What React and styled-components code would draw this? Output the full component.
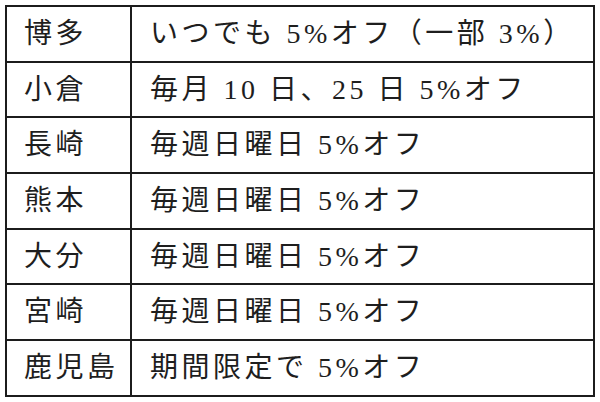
import React from "react";
import styled, { createGlobalStyle } from "styled-components";

const Global = createGlobalStyle`
  html, body { margin: 0; padding: 0; background: #ffffff; }
  body { font-family: "Liberation Serif", "Noto Sans CJK JP", serif; }
`;

const Table = styled.table`
  border-collapse: collapse;
  margin: 5px 0 0 5px;
  width: 590px;
  table-layout: fixed;
  color: #1e1e1e;
  font-family: "Liberation Serif", "Noto Sans CJK JP", serif;
  font-size: 28px;
  letter-spacing: 3.5px;
`;

const Row = styled.tr`
  height: 55.7px;
`;

const Cell = styled.td`
  border: 2px solid #1c1c1c;
  padding: 0 0 0 ${(p) => (p.$head ? 17 : 18)}px;
  width: ${(p) => (p.$head ? "106px" : "auto")};
  vertical-align: middle;
  white-space: nowrap;
  line-height: 1;
  font-weight: 400;
`;

const rows = [
  ["博多", "いつでも 5%オフ（一部 3%）"],
  ["小倉", "毎月 10 日、25 日 5%オフ"],
  ["長崎", "毎週日曜日 5%オフ"],
  ["熊本", "毎週日曜日 5%オフ"],
  ["大分", "毎週日曜日 5%オフ"],
  ["宮崎", "毎週日曜日 5%オフ"],
  ["鹿児島", "期間限定で 5%オフ"],
];

export default function App() {
  return (
    <>
      <Global />
      <Table>
        <tbody>
          {rows.map(([city, text]) => (
            <Row key={city}>
              <Cell $head>{city}</Cell>
              <Cell>{text}</Cell>
            </Row>
          ))}
        </tbody>
      </Table>
    </>
  );
}
